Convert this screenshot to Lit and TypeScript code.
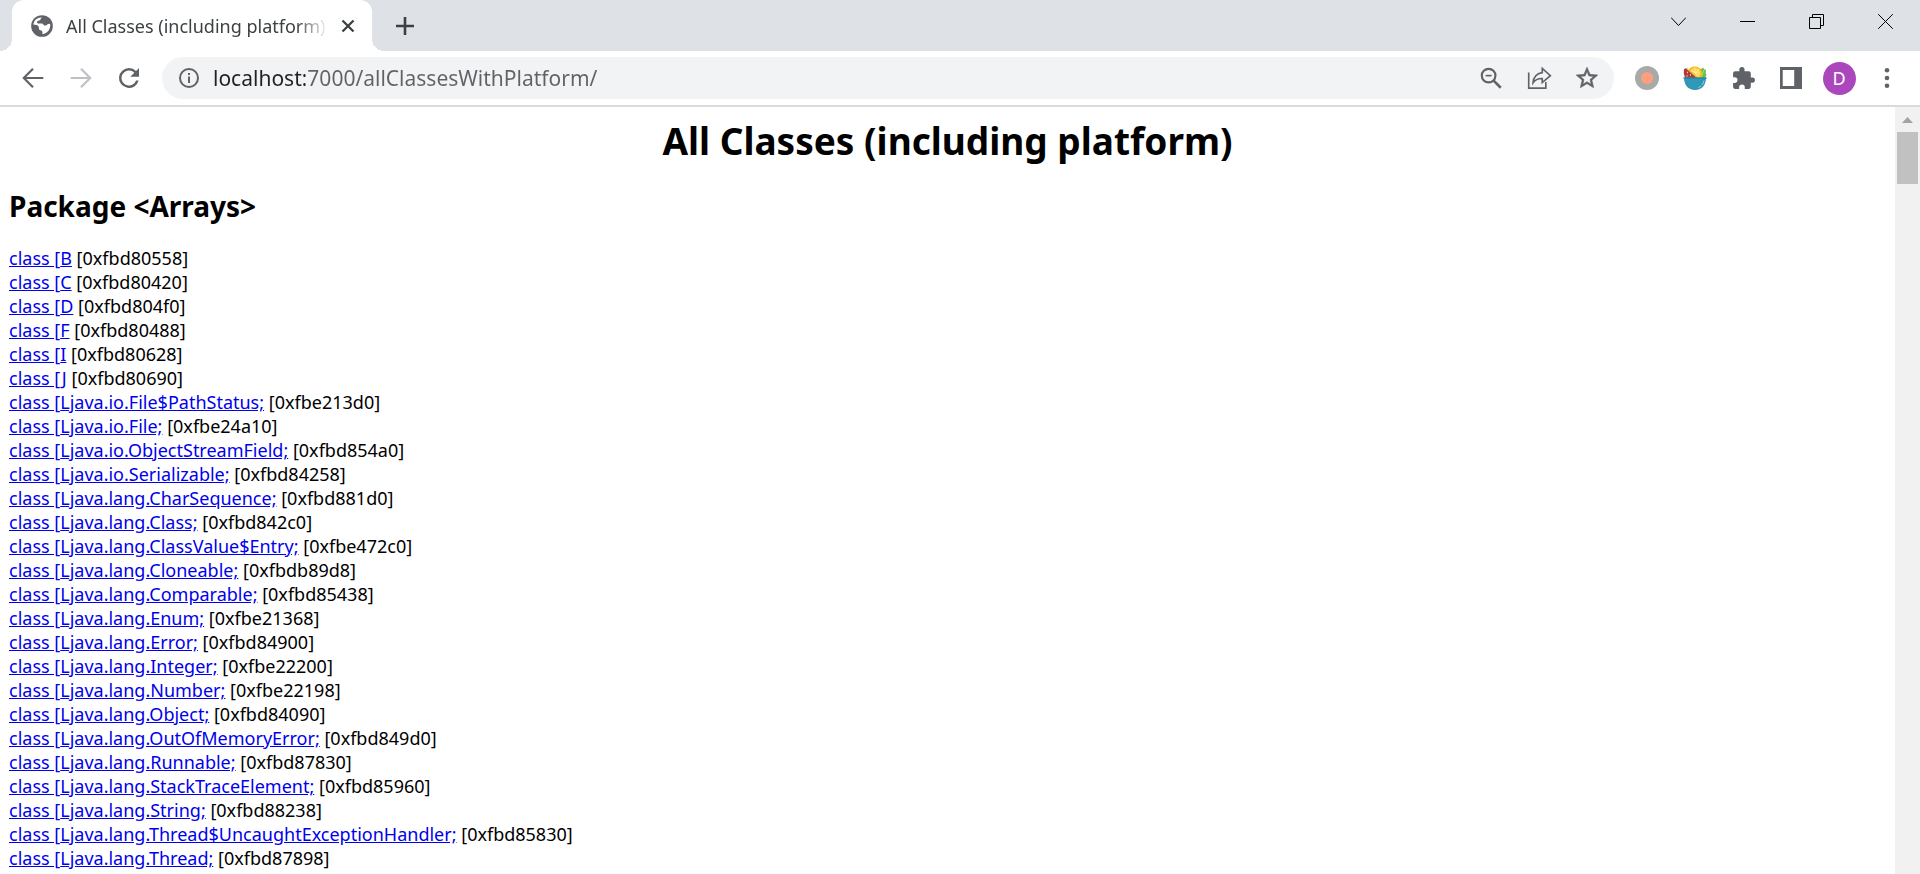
import { LitElement, html, css, svg } from "lit";
import { customElement } from "lit/decorators.js";

const CLASSES: [string, string][] = [
  ["B", "0xfbd80558"],
  ["C", "0xfbd80420"],
  ["D", "0xfbd804f0"],
  ["F", "0xfbd80488"],
  ["I", "0xfbd80628"],
  ["J", "0xfbd80690"],
  ["Ljava.io.File$PathStatus;", "0xfbe213d0"],
  ["Ljava.io.File;", "0xfbe24a10"],
  ["Ljava.io.ObjectStreamField;", "0xfbd854a0"],
  ["Ljava.io.Serializable;", "0xfbd84258"],
  ["Ljava.lang.CharSequence;", "0xfbd881d0"],
  ["Ljava.lang.Class;", "0xfbd842c0"],
  ["Ljava.lang.ClassValue$Entry;", "0xfbe472c0"],
  ["Ljava.lang.Cloneable;", "0xfbdb89d8"],
  ["Ljava.lang.Comparable;", "0xfbd85438"],
  ["Ljava.lang.Enum;", "0xfbe21368"],
  ["Ljava.lang.Error;", "0xfbd84900"],
  ["Ljava.lang.Integer;", "0xfbe22200"],
  ["Ljava.lang.Number;", "0xfbe22198"],
  ["Ljava.lang.Object;", "0xfbd84090"],
  ["Ljava.lang.OutOfMemoryError;", "0xfbd849d0"],
  ["Ljava.lang.Runnable;", "0xfbd87830"],
  ["Ljava.lang.StackTraceElement;", "0xfbd85960"],
  ["Ljava.lang.String;", "0xfbd88238"],
  ["Ljava.lang.Thread$UncaughtExceptionHandler;", "0xfbd85830"],
  ["Ljava.lang.Thread;", "0xfbd87898"],
];

const icon = (size: number, body: unknown) =>
  html`<svg width=${size} height=${size} viewBox="0 0 24 24" aria-hidden="true">${body}</svg>`;

const globe = icon(
  26,
  svg`<circle cx="12" cy="12" r="10" fill="#5f6368"/>
  <path fill="#fff" d="M12 4.200c-1.200.6-1 1.900-1.900 2.500-.9.500-2.300.2-2.600 1.400-.3 1.300.7 1.700 1.900 1.700h2.500c1.200 0 1.300 1.500 2.300 1.800 1 .2 2.300-.2 2.900-1.200.4-.7 1.400-.6 2.400-.5.800 4.800-2.500 9-7.100 9.700 0-1.200.2-2.500-.6-3.200-.7-.6-2-.3-2.500-1.400-.4-1 .1-2.100-.7-2.900C7.500 11 5.700 11.200 4 10.700 4.500 6.800 7.900 3.800 12 4.200z"/>
  <path fill="#5f6368" d="M12.500 3.500l3 .5c2.200 1 3.800 3 4.300 5.400l-3.400.6c-1 .2-1.300 1-2.200.8-.7-.2-.6-1-.1-1.600.5-.5.4-.9-.3-1-.9 0-1.600-.5-1.500-1.400.1-.7.7-1 1.300-1.200z"/>`,
);
const closeTab = icon(24, svg`<path d="M6.500 6.500l11 11M17.500 6.500l-11 11" stroke="#3c4043" stroke-width="2.300"/>`);
const plus = icon(24, svg`<path d="M12 3v18M3 12h18" stroke="#3c4043" stroke-width="2.600"/>`);
const back = icon(26, svg`<path d="M21.500 12H3.800M12 3.500L3.500 12l8.500 8.500" fill="none" stroke="#5f6368" stroke-width="2"/>`);
const forward = icon(26, svg`<path d="M2.500 12h17.700M12 3.500l8.500 8.500-8.500 8.500" fill="none" stroke="#bdc1c6" stroke-width="2"/>`);
const reload = icon(
  30,
  svg`<path fill="#5f6368" d="M17.650 6.350A7.950 7.950 0 0 0 12 4a8 8 0 1 0 7.730 10h-2.080A6 6 0 1 1 12 6c1.660 0 3.140.69 4.220 1.780L13 11h7V4z"/>`,
);
const info = icon(
  24,
  svg`<circle cx="12" cy="12" r="9" fill="none" stroke="#5f6368" stroke-width="2"/><path d="M12 10.500V17M12 7v2" stroke="#5f6368" stroke-width="2"/>`,
);
const zoomOut = icon(
  26,
  svg`<circle cx="9.800" cy="9.800" r="6.300" fill="none" stroke="#5f6368" stroke-width="2"/><path d="M14.200 14.200l6.800 6.800" stroke="#5f6368" stroke-width="2.400"/><path d="M7 9.800h5.600" stroke="#5f6368" stroke-width="1.500"/>`,
);
const share = icon(
  26,
  svg`<path d="M2.500 7v14.300h15.800v-5.500" fill="none" stroke="#5f6368" stroke-width="1.500"/><path d="M15 3.200l7.500 6.600-7.500 6.400v-3.700c-3.800-.1-6.500 1-8.500 4 .3-5 3.300-8.600 8.500-9.500z" fill="none" stroke="#5f6368" stroke-width="1.500"/>`,
);
const star = icon(
  26,
  svg`<path fill="#5f6368" stroke="#5f6368" stroke-width=".5" d="M22 9.240l-7.190-.62L12 2 9.190 8.630 2 9.240l5.460 4.730L5.820 21 12 17.270 18.180 21l-1.630-7.030zM12 15.400l-3.760 2.270 1-4.280-3.320-2.880 4.380-.38L12 6.100l1.710 4.040 4.380.38-3.320 2.880 1 4.280z"/>`,
);
const recorder = icon(24, svg`<circle cx="12" cy="12" r="12" fill="#a9a9a9"/><circle cx="12" cy="12" r="6" fill="#ffa07a"/>`);
const salad = icon(
  24,
  svg`<path d="M15 4l4-1.500 1.200-1 .8 1.800 2 .700-.3 3 .8 2-1.500 3H14z" fill="#6cc04a"/>
  <path d="M18 12l3-8" stroke="#a5dc86" stroke-width="1"/>
  <path d="M1 3l2.500-1L15 12H2Q0 7 1 3z" fill="#b03a38"/>
  <path d="M3.500 2L15 12" stroke="#e9d3c5" stroke-width="1.200"/>
  <path d="M4 6.500h1M7 9h1M3.500 10h1" stroke="#f3d5d0" stroke-width="1.300"/>
  <path d="M5.500 4.500C7-.5 17-1.500 19 6q.5 3-1 6h-4z" fill="#fbb917"/>
  <path d="M7.500 4.700C9.500.7 16 .5 17.300 6q.4 2.500-1 5l-2-.5z" fill="#ffd54a"/>
  <path d="M12 1.500v5l-4-2M12 6.500l4-3M12 6.500l5 .8M12 6.500l3 4" stroke="#fff3c0" stroke-width=".8" fill="none"/>
  <path d="M1 12h22c0 6.500-4 12-11 12S1 18.500 1 12z" fill="#2f97b7"/>
  <path d="M.5 11.300h23v1.600H.5z" fill="#2489aa"/>
  <path d="M21 14.500c-.5 3.200-2.500 5.800-5.500 7" stroke="#8fd0e2" stroke-width="1" stroke-dasharray="5 1.500" fill="none"/>`,
);
const puzzle = icon(
  25,
  svg`<path fill="#5f6368" d="M20.500 11H19V7c0-1.100-.9-2-2-2h-4V3.500a2.500 2.500 0 0 0-5 0V5H4c-1.100 0-1.990.9-1.990 2v3.800H3.500a2.700 2.700 0 0 1 0 5.400H2V20c0 1.100.9 2 2 2h3.800v-1.500a2.700 2.700 0 0 1 5.400 0V22H17c1.100 0 2-.9 2-2v-4h1.500a2.500 2.500 0 0 0 0-5z"/>`,
);
const sidePanel = icon(22, svg`<path fill="#5f6368" fill-rule="evenodd" d="M0 0h24v24H0zM3 3.200v17.600h12.500V3.200z"/>`);
const more = icon(
  24,
  svg`<g fill="#5f6368"><circle cx="12" cy="4.300" r="2.300"/><circle cx="12" cy="12" r="2.300"/><circle cx="12" cy="19.700" r="2.300"/></g>`,
);

const glyph = (d: string) =>
  html`<svg width="15" height="15" viewBox="0 0 15 15" aria-hidden="true"><path d=${d} fill="none" stroke="#000" /></svg>`;

@customElement("app-root")
export class AppRoot extends LitElement {
  static styles = css`
    :host {
      display: flex;
      flex-direction: column;
      height: 100vh;
      overflow: hidden;
      background: #fff;
      color: #000;
      font-family: "Noto Sans", "Open Sans", sans-serif;
      font-size: 18px;
    }
    button {
      display: flex;
      align-items: center;
      justify-content: center;
      padding: 0;
      border: 0;
      background: none;
      font: inherit;
    }
    svg {
      display: block;
      flex: none;
    }
    .strip {
      display: flex;
      flex: none;
      height: 51px;
      background: #dee1e6;
    }
    .curve {
      align-self: flex-end;
      width: 12px;
      height: 12px;
      background: radial-gradient(circle at 0 0, #dee1e6 12px, #fff 12px);
    }
    .curve.right {
      background: radial-gradient(circle at 100% 0, #dee1e6 12px, #fff 12px);
    }
    .tab {
      display: flex;
      align-items: center;
      box-sizing: border-box;
      width: 360px;
      padding: 0 12px 0 17px;
      border-radius: 12px 12px 0 0;
      background: #fff;
    }
    .title {
      flex: 1;
      margin: 0 8px 0 11px;
      overflow: hidden;
      white-space: nowrap;
      color: #3c4043;
      -webkit-mask-image: linear-gradient(to left, transparent, #000 32px);
      mask-image: linear-gradient(to left, transparent, #000 32px);
    }
    .new-tab {
      width: 42px;
    }
    .window {
      display: flex;
      height: 43px;
      margin-left: auto;
    }
    .window button {
      width: 69px;
    }
    .toolbar {
      display: flex;
      flex: none;
      align-items: center;
      height: 54px;
      padding: 0 9px;
      border-bottom: 2px solid #dadada;
    }
    .tool {
      width: 48px;
      height: 42px;
    }
    .omnibox {
      display: flex;
      flex: 1;
      align-items: center;
      height: 42px;
      margin: 0 9px;
      padding: 0 3px 0 15px;
      border-radius: 21px;
      background: #f1f3f4;
    }
    .url {
      flex: 1;
      min-width: 0;
      height: 32px;
      margin-left: 12px;
      padding: 0;
      border: 0;
      outline: 0;
      font: inherit;
      font-size: 21px;
      color: transparent;
      background: linear-gradient(to right, #202124 92px, #5f6368 92px);
      -webkit-background-clip: text;
      background-clip: text;
    }
    .avatar {
      display: grid;
      place-items: center;
      width: 33px;
      height: 33px;
      border-radius: 50%;
      background: #ab47bc;
      color: #fff;
      font-size: 18px;
    }
    .view {
      display: flex;
      flex: 1;
      min-height: 0;
    }
    .page {
      flex: 1;
      min-width: 0;
      padding: 10px 9px;
      overflow: hidden;
    }
    h1 {
      margin: 0;
      font-size: 37px;
      line-height: 48px;
      text-align: center;
    }
    h2 {
      margin: 23px 0 22px;
      font-size: 28px;
      line-height: 36px;
    }
    ul {
      margin: 0;
      padding: 0;
      list-style: none;
    }
    li {
      line-height: 24px;
      white-space: nowrap;
    }
    a {
      color: #0000ee;
    }
    .scrollbar {
      display: flex;
      flex-direction: column;
      align-items: center;
      width: 25px;
      background: #f1f1f1;
    }
    .up {
      width: 25px;
      height: 25px;
    }
    .thumb {
      width: 21px;
      height: 52px;
      background: #c1c1c1;
    }
  `;

  render() {
    return html`
      <header class="strip">
        <span class="curve"></span>
        <div class="tab">
          ${globe}
          <span class="title">All Classes (including platform)</span>
          <button aria-label="Close tab">${closeTab}</button>
        </div>
        <span class="curve right"></span>
        <button class="new-tab" aria-label="New tab">${plus}</button>
        <div class="window">
          <button aria-label="Search tabs">${glyph("M0 3.500l7.500 8 7.500-8")}</button>
          <button aria-label="Minimize">${glyph("M0 7.500h15")}</button>
          <button aria-label="Restore">${glyph("M.5 3.500h11v11H.5zM3.500 3.500V.5h11v11h-3")}</button>
          <button aria-label="Close">${glyph("M.2.2l14.600 14.600M14.800.2L.2 14.800")}</button>
        </div>
      </header>
      <nav class="toolbar">
        <button class="tool" aria-label="Back">${back}</button>
        <button class="tool" aria-label="Forward">${forward}</button>
        <button class="tool" aria-label="Reload">${reload}</button>
        <div class="omnibox">
          ${info}
          <input class="url" type="text" aria-label="Address" value="localhost:7000/allClassesWithPlatform/" />
          <button class="tool" aria-label="Zoom">${zoomOut}</button>
          <button class="tool" aria-label="Share">${share}</button>
          <button class="tool" aria-label="Bookmark">${star}</button>
        </div>
        <button class="tool" aria-label="Recorder">${recorder}</button>
        <button class="tool" aria-label="Salad">${salad}</button>
        <button class="tool" aria-label="Extensions">${puzzle}</button>
        <button class="tool" aria-label="Side panel">${sidePanel}</button>
        <button class="tool" aria-label="Profile"><span class="avatar">D</span></button>
        <button class="tool" aria-label="Menu">${more}</button>
      </nav>
      <div class="view">
        <main class="page">
          <h1>All Classes (including platform)</h1>
          <h2>Package &lt;Arrays&gt;</h2>
          <ul>
            ${CLASSES.map(([name, id]) => html`<li><a href="#${id}">class [${name}</a> [${id}]</li>`)}
          </ul>
        </main>
        <div class="scrollbar">
          <button class="up" aria-label="Scroll up">
            <svg width="11" height="6" viewBox="0 0 11 6" aria-hidden="true"><path d="M0 6L5.500 0 11 6z" fill="#a3a3a3" /></svg>
          </button>
          <div class="thumb"></div>
        </div>
      </div>
    `;
  }
}
